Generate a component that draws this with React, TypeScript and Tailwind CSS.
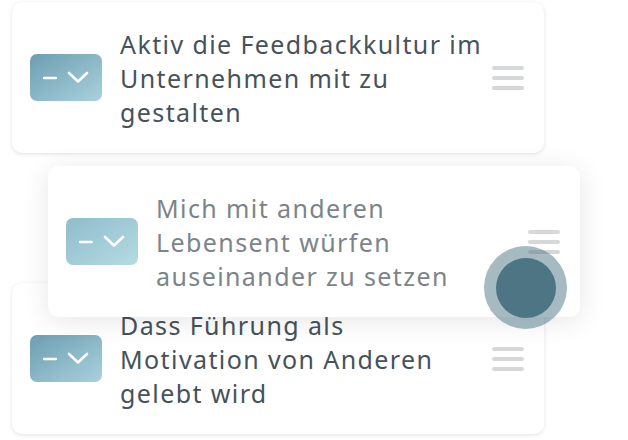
function Badge({ faded }: { faded?: boolean }) {
  return (
    <div
      className={
        'w-[72px] h-[47px] shrink-0 rounded-[7px] flex items-center justify-center gap-[10px] ' +
        (faded ? 'bg-gradient-to-br from-[#8fbccb] to-[#b6dbe3]' : 'bg-gradient-to-br from-[#6c9eb1] to-[#aad1dc]')
      }
    >
      <svg width="14" height="4" viewBox="0 0 14 4">
        <line x1="1" y1="2" x2="13" y2="2" stroke="white" strokeWidth="2.5" strokeLinecap="round" />
      </svg>
      <svg width="22" height="13" viewBox="0 0 22 13">
        <polyline points="2,2 11,10.5 20,2" fill="none" stroke="white" strokeWidth="2.6" strokeLinecap="round" strokeLinejoin="round" />
      </svg>
    </div>
  );
}

function Handle() {
  return (
    <div className="w-8 flex flex-col gap-[6px] shrink-0">
      <div className="h-1 rounded-full bg-[#d5d7d9]" />
      <div className="h-1 rounded-full bg-[#d5d7d9]" />
      <div className="h-1 rounded-full bg-[#d5d7d9]" />
    </div>
  );
}

function Card({ text, faded, className }: { text: string[]; faded?: boolean; className?: string }) {
  return (
    <div
      className={
        'w-[532px] h-[151px] bg-white rounded-[10px] flex items-center pl-[18px] pr-5 ' + (className ?? '')
      }
    >
      <Badge faded={faded} />
      <div
        className={
          'flex-1 pl-[18px] text-[25px] leading-[34px] tracking-[1.4px] whitespace-nowrap ' +
          (faded ? 'text-[#7c8489]' : 'text-[#46525a]')
        }
      >
        {text.map((t) => (
          <div key={t}>{t}</div>
        ))}
      </div>
      <Handle />
    </div>
  );
}

export default function App() {
  return (
    <div className="w-[628px] h-[440px] bg-white relative overflow-hidden" style={{ fontFamily: '"Noto Sans", sans-serif' }}>
      <div className="pl-3 pt-[2px] flex flex-col gap-[130px]">
        <Card
          text={['Aktiv die Feedbackkultur im', 'Unternehmen mit zu', 'gestalten']}
          className="shadow-[0_1px_4px_rgba(0,0,0,0.12)]"
        />
        <Card
          text={['Dass Führung als', 'Motivation von Anderen', 'gelebt wird']}
          className="shadow-[0_1px_4px_rgba(0,0,0,0.12)]"
        />
      </div>
      <div className="absolute left-[48px] top-[166px]">
        <Card
          faded
          text={['Mich mit anderen', 'Lebensent würfen', 'auseinander zu setzen']}
          className="shadow-[0_4px_28px_rgba(0,0,0,0.10)]"
        />
      </div>
      <div className="absolute left-[484px] top-[246px] w-[83px] h-[83px] rounded-full bg-[#4e7584]/50 flex items-center justify-center">
        <div className="w-[60px] h-[60px] rounded-full bg-[#4e7584]" />
      </div>
    </div>
  );
}
